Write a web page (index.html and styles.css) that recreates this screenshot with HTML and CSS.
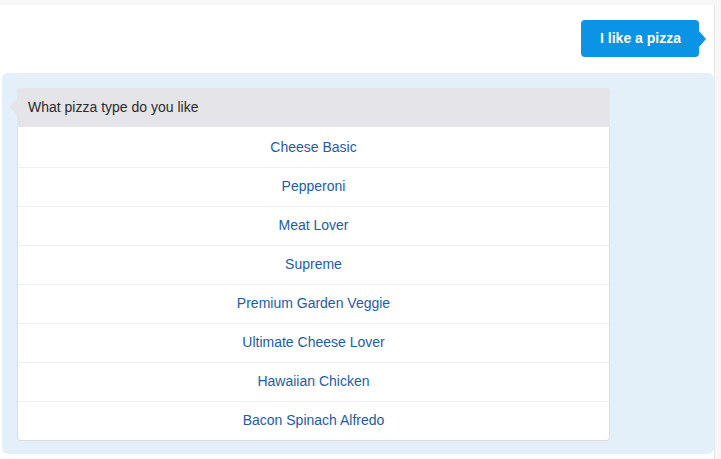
FILE: index.html
```html
<!DOCTYPE html>
<html>
<head>
<meta charset="utf-8">
<link rel="stylesheet" href="styles.css">
</head>
<body>
<div class="chat">
  <div class="user-row">
    <div class="user-bubble">I like a pizza</div>
  </div>
  <div class="bot-panel">
    <div class="card">
      <div class="card-header">What pizza type do you like</div>
      <div class="option">Cheese Basic</div>
      <div class="option">Pepperoni</div>
      <div class="option">Meat Lover</div>
      <div class="option">Supreme</div>
      <div class="option">Premium Garden Veggie</div>
      <div class="option">Ultimate Cheese Lover</div>
      <div class="option">Hawaiian Chicken</div>
      <div class="option">Bacon Spinach Alfredo</div>
    </div>
  </div>
</div>
</body>
</html>
```
FILE: styles.css
```css
html, body {
  margin: 0;
  padding: 0;
}
body {
  background: #f7f7f7;
  font-family: "Liberation Sans", Arial, sans-serif;
  font-size: 14px;
  overflow: hidden;
}
.chat {
  margin-top: 5px;
  width: 714px;
  height: 454px;
  background: #fff;
  border-right: 1px solid #e6e6e6;
  display: flex;
  flex-direction: column;
}
.user-row {
  display: flex;
  justify-content: flex-end;
  padding: 15px 15px 0 0;
}
.user-bubble {
  position: relative;
  height: 37px;
  line-height: 37px;
  padding: 0 18px 0 19px;
  background: #0b93e6;
  color: #fff;
  font-weight: 600;
  border-radius: 4px;
}
.user-bubble::after {
  content: "";
  position: absolute;
  right: -7px;
  top: 11px;
  border-top: 8px solid transparent;
  border-bottom: 8px solid transparent;
  border-left: 7px solid #0b93e6;
}
.bot-panel {
  margin: 16px 0 0 2px;
  width: 712px;
  height: 381px;
  box-sizing: border-box;
  background: #e3f0f9;
  border-radius: 6px;
  padding: 15px 0 0 15px;
}
.card {
  width: 593px;
  box-sizing: border-box;
  background: #fff;
  border: 1px solid #dedde2;
  border-top: none;
  border-radius: 4px;
}
.card-header {
  position: relative;
  height: 39px;
  line-height: 38px;
  padding-left: 11px;
  margin: 0 -1px;
  background: #e5e4e9;
  color: #2b2b2b;
  border-radius: 4px 4px 0 0;
}
.card-header::before {
  content: "";
  position: absolute;
  left: -8px;
  top: 11px;
  border-top: 8px solid transparent;
  border-bottom: 8px solid transparent;
  border-right: 8px solid #e5e4e9;
}
.option {
  height: 39px;
  line-height: 37px;
  text-align: center;
  color: #1d5ca7;
  border-top: 1px solid #efefef;
  box-sizing: border-box;
}
.card-header + .option {
  border-top: none;
  height: 40px;
  line-height: 40px;
}
```
